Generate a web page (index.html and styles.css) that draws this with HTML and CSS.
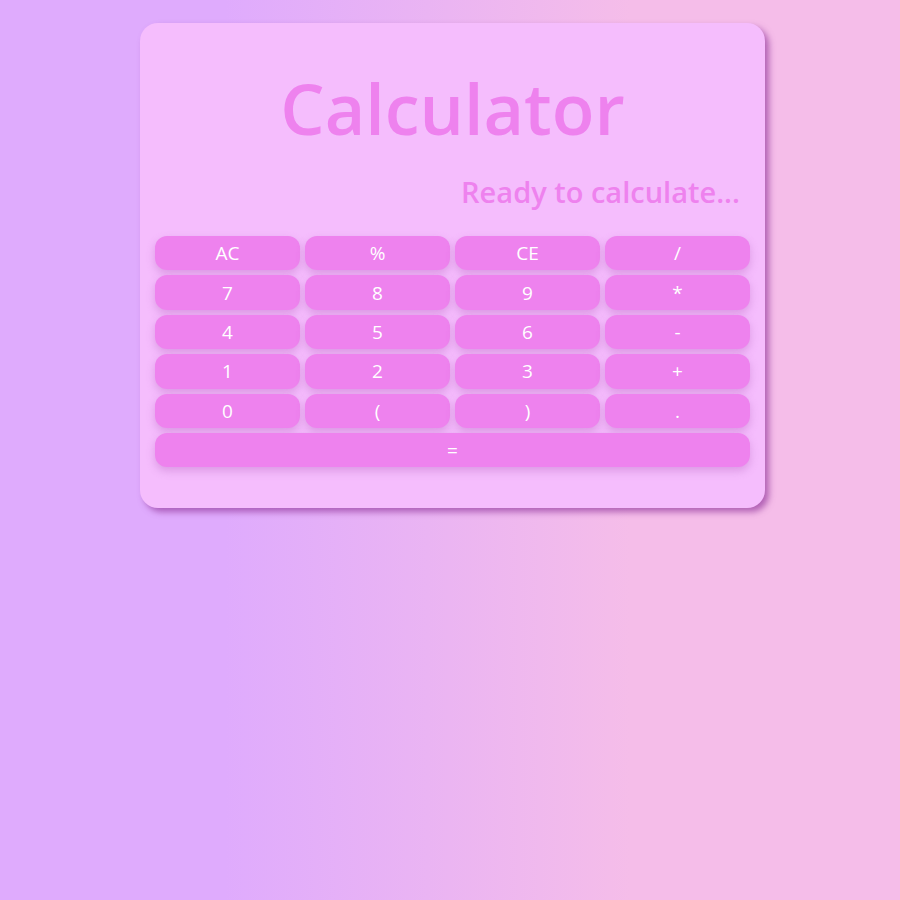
FILE: index.html
```html
<!DOCTYPE html>
<html>
<head>
<meta charset="utf-8">
<link rel="stylesheet" href="styles.css">
</head>
<body>
<div class="page">
  <div class="card">
    <h1 class="title">Calculator</h1>
    <div class="display">Ready to calculate...</div>
    <div class="keys">
      <button class="key">AC</button>
      <button class="key">%</button>
      <button class="key">CE</button>
      <button class="key">/</button>
      <button class="key">7</button>
      <button class="key">8</button>
      <button class="key">9</button>
      <button class="key">*</button>
      <button class="key">4</button>
      <button class="key">5</button>
      <button class="key">6</button>
      <button class="key">-</button>
      <button class="key">1</button>
      <button class="key">2</button>
      <button class="key">3</button>
      <button class="key">+</button>
      <button class="key">0</button>
      <button class="key">(</button>
      <button class="key">)</button>
      <button class="key">.</button>
      <button class="key wide">=</button>
    </div>
  </div>
</div>
</body>
</html>
```

FILE: styles.css
```css
html, body {
  margin: 0;
  height: 100%;
}
body {
  background: linear-gradient(to right, #dfabfd 0%, #dfabfd 25%, #f5bde9 70%, #f5bde9 100%);
  font-family: "Open Sans", "Noto Sans", sans-serif;
}
.page {
  display: flex;
  justify-content: center;
  padding: 23px 0 0 5px;
}
.card {
  width: 595px;
  padding: 0 15px 41px;
  background: #f5bdfd;
  border-radius: 18px;
  box-shadow: 4px 4px 6px rgba(150, 60, 160, 0.7);
}
.title {
  margin: 0;
  padding-top: 40px;
  height: 105px;
  text-align: center;
  color: #ee82ee;
  font-size: 70px;
  font-weight: 600;
  line-height: 90px;
}
.display {
  text-align: right;
  padding-right: 10px;
  padding-top: 4px;
  color: #ee82ee;
  font-size: 29px;
  font-weight: 600;
  line-height: 40px;
  height: 64px;
}
.keys {
  display: grid;
  grid-template-columns: repeat(4, 1fr);
  gap: 5px;
}
.key {
  height: 34.4px;
  border: none;
  border-radius: 12px;
  background: #ee82ee;
  color: #fff;
  font-family: inherit;
  font-size: 19px;
  padding: 0;
  box-shadow: 0 4px 8px rgba(190, 110, 200, 0.45);
}
.wide {
  grid-column: 1 / -1;
}
```
